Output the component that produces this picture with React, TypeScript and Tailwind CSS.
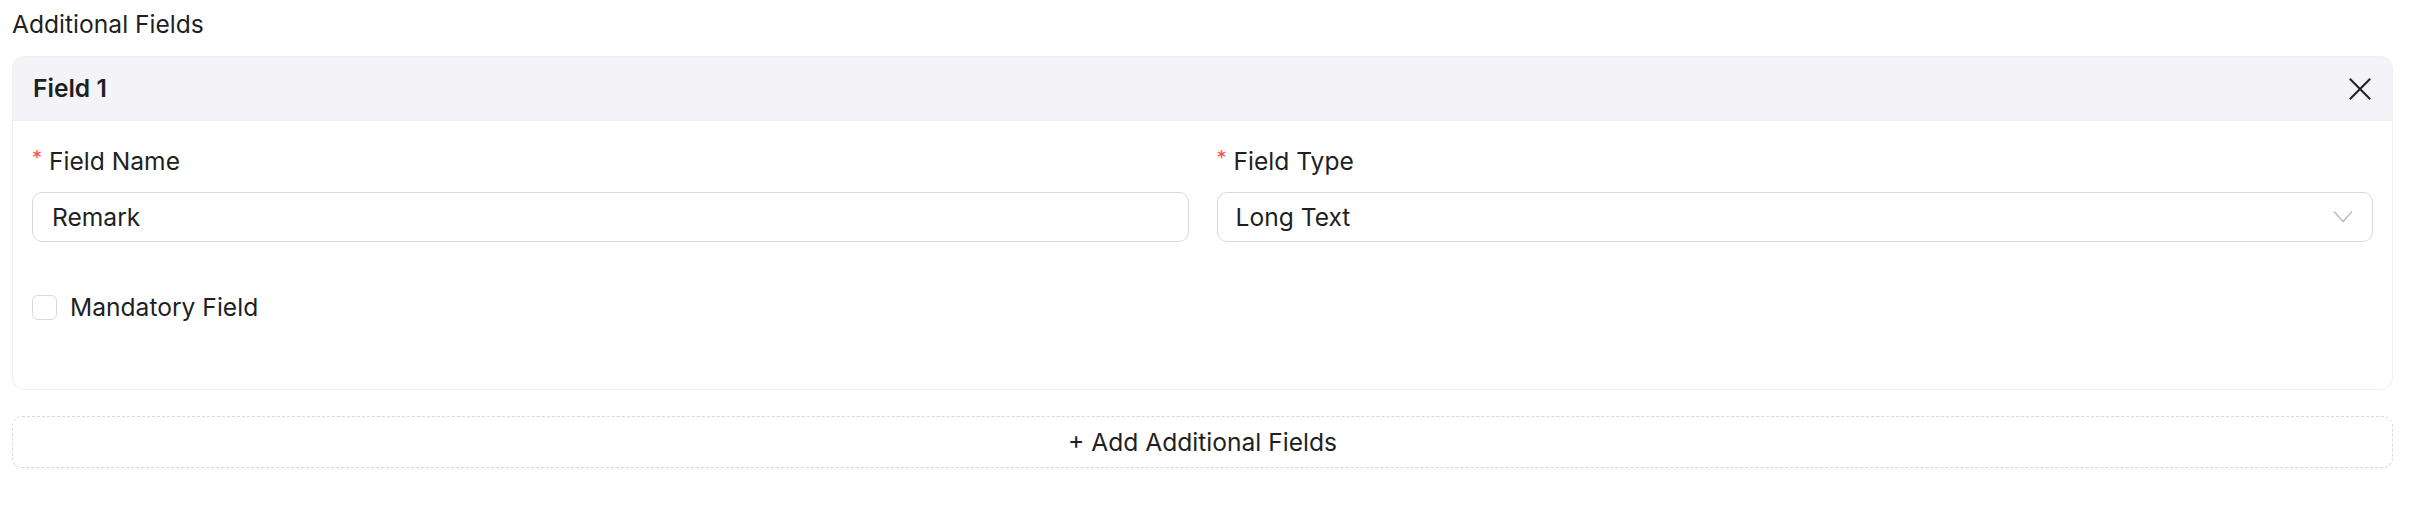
import React from "react";

function CloseIcon() {
  return (
    <svg width="24" height="24" viewBox="0 0 24 24" fill="none">
      <path d="M2.5 2.5 L21.5 21.5 M21.5 2.5 L2.5 21.5" stroke="#1f1f1f" strokeWidth="2" strokeLinecap="square" />
    </svg>
  );
}

function ChevronDown() {
  return (
    <svg width="20" height="14" viewBox="0 0 20 14" fill="none">
      <path d="M1 1.5 L10 11.5 L19 1.5" stroke="#bfbfbf" strokeWidth="1.6" />
    </svg>
  );
}

function Label({ text }: { text: string }) {
  return (
    <div className="h-[40px] flex items-center mb-[11px]">
      <span className="w-[17px] text-[20px] leading-none text-[#ff4d4f] -mt-[6px]">*</span>
      <span>{text}</span>
    </div>
  );
}

export default function App() {
  return (
    <div className="w-[2422px] h-[516px] bg-white pl-[12px] pr-[29px] font-['Inter',sans-serif] text-[24.6px] text-[#1f1f1f]">
      <div className="h-[48px] flex items-center mb-[8px]">Additional Fields</div>
      <div className="border border-[#f0f0f0] rounded-[12px] overflow-hidden">
        <div className="h-[64px] bg-[#f3f3f8] border-b border-[#f0f0f0] px-[20px] flex items-center justify-between">
          <span className="font-semibold">Field 1</span>
          <CloseIcon />
        </div>
        <div className="px-[19px] pt-[20px] pb-[57px]">
          <div className="grid grid-cols-2 gap-x-[28px]">
            <div>
              <Label text="Field Name" />
              <div className="h-[50px] border border-[#d9d9d9] rounded-[10px] flex items-center px-[19px]">
                Remark
              </div>
            </div>
            <div>
              <Label text="Field Type" />
              <div className="h-[50px] border border-[#d9d9d9] rounded-[10px] flex items-center justify-between pl-[18px] pr-[19px]">
                <span>Long Text</span>
                <ChevronDown />
              </div>
            </div>
          </div>
          <div className="mt-[40px] h-[50px] flex items-center">
            <span className="w-[25px] h-[25px] border border-[#d9d9d9] rounded-[6px] mr-[13px]" />
            <span>Mandatory Field</span>
          </div>
        </div>
      </div>
      <div className="mt-[26px] h-[52px] border border-dashed border-[#d9d9d9] rounded-[10px] shadow-[0_2px_0_rgba(0,0,0,0.02)] flex items-center justify-center">
        + Add Additional Fields
      </div>
    </div>
  );
}
